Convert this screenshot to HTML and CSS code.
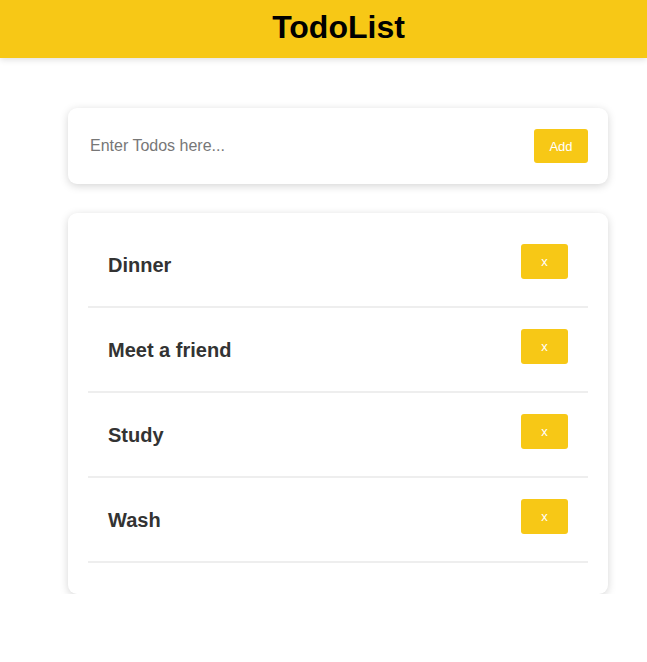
FILE: index.html
```html
<!DOCTYPE html>
<html>
<head>
<meta charset="utf-8">
<title>TodoList</title>
<link rel="stylesheet" href="styles.css">
</head>
<body>
<header class="header"><h1 class="title">TodoList</h1></header>
<main class="main">
  <form class="card input-card">
    <input class="todo-input" type="text" placeholder="Enter Todos here..." autofocus>
    <button class="btn add-btn" type="button">Add</button>
  </form>
  <ul class="card list">
    <li class="item"><span class="item-text">Dinner</span><button class="btn del-btn" type="button">x</button></li>
    <li class="item"><span class="item-text">Meet a friend</span><button class="btn del-btn" type="button">x</button></li>
    <li class="item"><span class="item-text">Study</span><button class="btn del-btn" type="button">x</button></li>
    <li class="item"><span class="item-text">Wash</span><button class="btn del-btn" type="button">x</button></li>
  </ul>
</main>
</body>
</html>
```

FILE: styles.css
```css
* { box-sizing: border-box; }
html, body { margin: 0; padding: 0; background: #fff; }
body { font-family: "Liberation Sans", Arial, sans-serif; }
.header {
  background: #f7c816;
  height: 58px;
  box-shadow: 0 2px 6px rgba(0,0,0,0.12);
  display: flex;
  justify-content: center;
  align-items: center;
  padding-left: 30px;
}
.title {
  margin: 0;
  font-size: 32px;
  font-weight: bold;
  color: #000;
  line-height: 1;
  padding-bottom: 4px;
}
.main {
  width: 540px;
  margin: 50px 0 0 68px;
}
.card {
  background: #fff;
  border-radius: 9px;
  box-shadow: 0 2px 9px rgba(0,0,0,0.17);
}
.input-card {
  height: 76px;
  display: flex;
  align-items: center;
  padding: 0 20px 0 22px;
  margin: 0 0 29px;
}
.todo-input {
  flex: 1;
  border: none;
  outline: none;
  font-family: "Liberation Sans", Arial, sans-serif;
  font-size: 16px;
  color: #333;
  padding: 0;
  background: transparent;
}
.todo-input::placeholder { color: #777; }
.btn {
  background: #f7c816;
  color: #fff;
  border: none;
  border-radius: 3px;
  font-family: "Liberation Sans", Arial, sans-serif;
  font-size: 13px;
  padding: 0;
  cursor: pointer;
}
.add-btn { width: 54px; height: 34px; }
.list {
  list-style: none;
  margin: 0;
  padding: 10px 20px 31px;
}
.item {
  display: flex;
  justify-content: space-between;
  align-items: flex-start;
  padding: 21px 20px 0;
  height: 85px;
  border-bottom: 2px solid #eeeeee;
}
.item-text {
  font-size: 20px;
  font-weight: bold;
  color: #333;
  margin-top: 10px;
}
.del-btn { width: 47px; height: 35px; font-size: 13px; }
```
